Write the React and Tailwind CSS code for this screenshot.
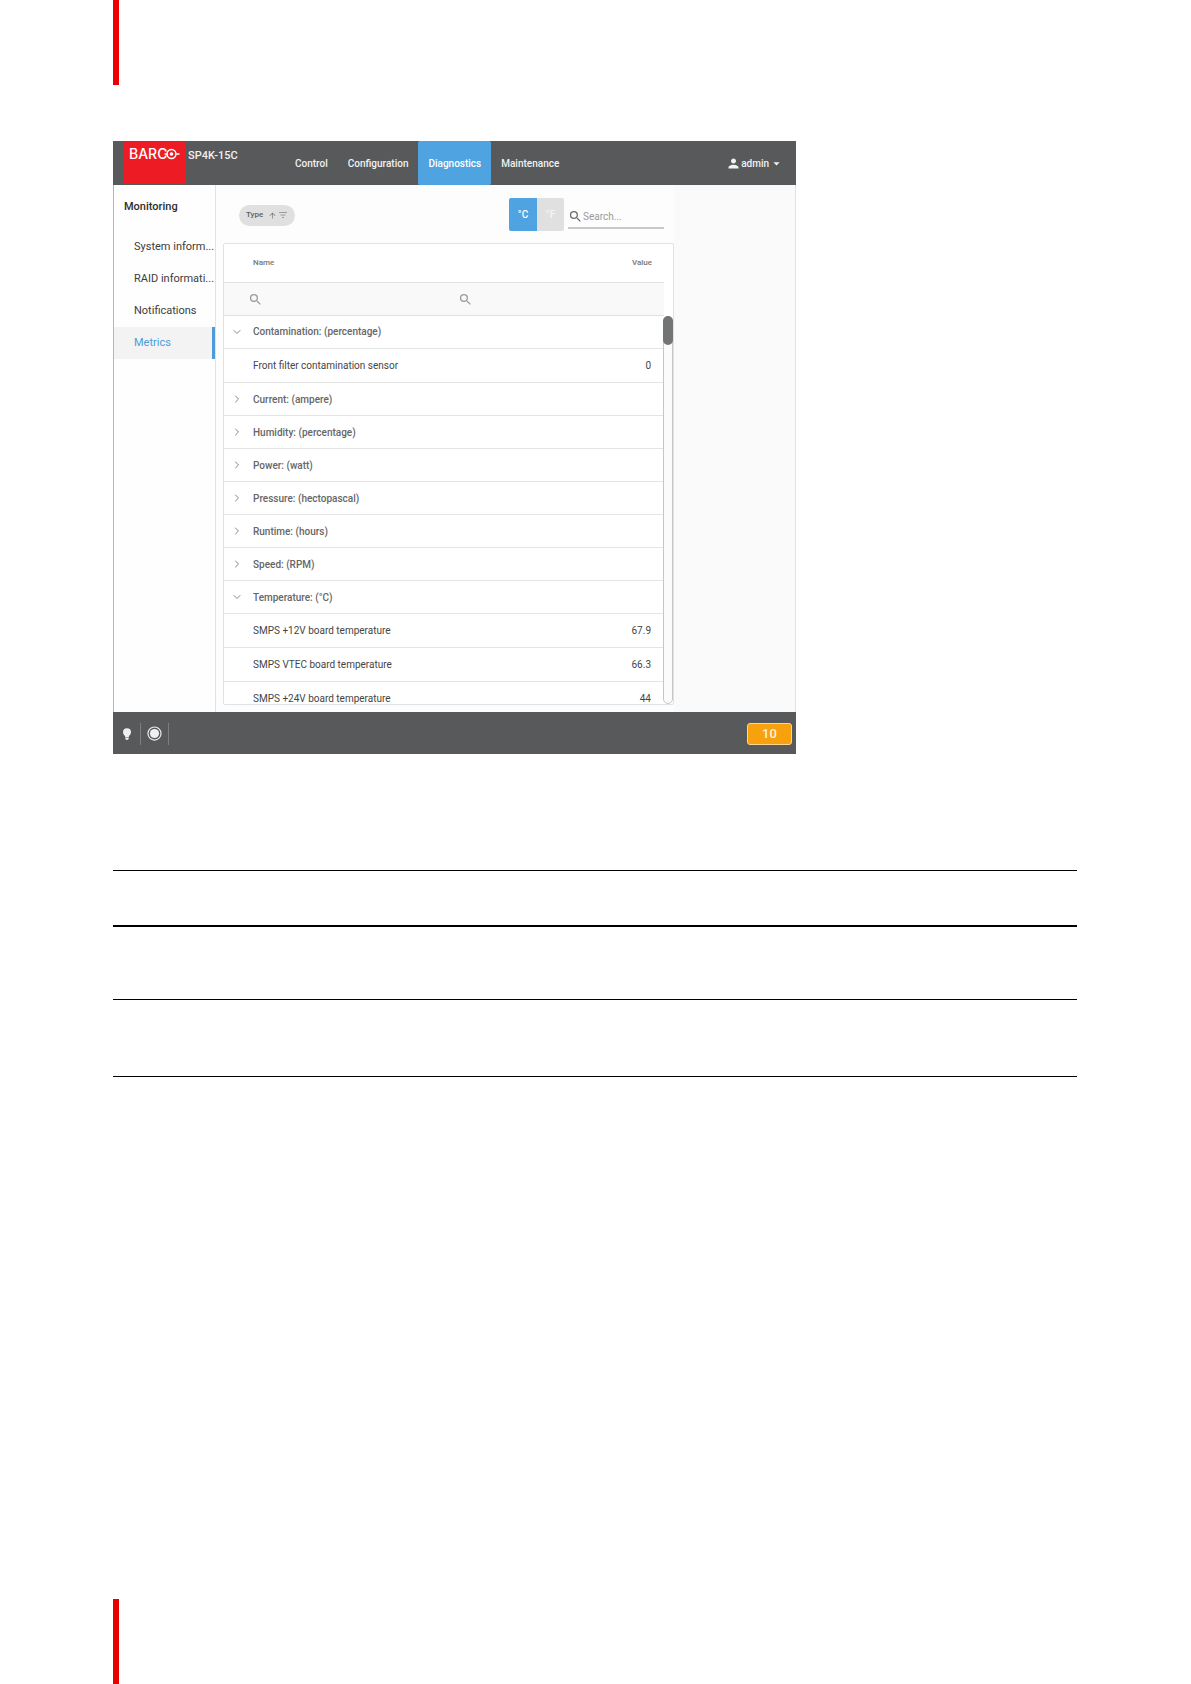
import { useState } from "react";
import { ChevronDown, ChevronRight } from "lucide-react";
import {
  MdArrowDropDown,
  MdArrowUpward,
  MdPerson,
  MdSearch,
} from "react-icons/md";

const tabs = ["Control", "Configuration", "Diagnostics", "Maintenance"];

const menu = [
  "System inform...",
  "RAID informati...",
  "Notifications",
  "Metrics",
];

const initialGroups = [
  {
    label: "Contamination: (percentage)",
    open: true,
    rows: [{ name: "Front filter contamination sensor", value: "0" }],
  },
  { label: "Current: (ampere)", rows: [] },
  { label: "Humidity: (percentage)", rows: [] },
  { label: "Power: (watt)", rows: [] },
  { label: "Pressure: (hectopascal)", rows: [] },
  { label: "Runtime: (hours)", rows: [] },
  { label: "Speed: (RPM)", rows: [] },
  {
    label: "Temperature: (°C)",
    open: true,
    rows: [
      { name: "SMPS +12V board temperature", value: "67.9" },
      { name: "SMPS VTEC board temperature", value: "66.3" },
      { name: "SMPS +24V board temperature", value: "44" },
    ],
  },
];

const BarcoLogo = () => (
  <div className="flex h-[42px] w-[62px] shrink-0 items-start bg-[#ed1c24] pl-[5px] pt-[4px] text-white">
    <span className="font-[Inter,sans-serif] text-[14px] font-medium leading-4">
      BARC
    </span>
    <svg
      viewBox="0 0 18 12"
      className="-ml-[5px] mt-[2px] h-[12px] w-[18px] shrink-0"
      fill="none"
      stroke="currentColor"
      aria-hidden="true"
    >
      <circle cx="9.5" cy="6" r="4.4" strokeWidth="1.5" />
      <circle cx="9.5" cy="6" r="1.8" fill="currentColor" stroke="none" />
      <path d="M2.5 6H5M14 6h3.5" strokeWidth="1.5" />
    </svg>
  </div>
);

const Header = ({ tab, onTab }) => (
  <header className="flex h-[44px] items-center bg-[#58595b] text-[#f1f1f1]">
    <div className="flex w-[172px] shrink-0 items-start gap-[2px] pl-[11px]">
      <BarcoLogo />
      <span className="pt-[6px] text-[11px] font-medium leading-4">
        SP4K-15C
      </span>
    </div>
    <nav className="flex h-full">
      {tabs.map((t) => (
        <button
          key={t}
          type="button"
          onClick={() => onTab(t)}
          className={
            t === tab
              ? "rounded-[2px] bg-[#4fa3e0] px-[10px] text-[10px] font-medium text-white"
              : "px-[10px] text-[10px] font-medium"
          }
        >
          {t}
        </button>
      ))}
    </nav>
    <button
      type="button"
      className="ml-auto flex items-center pr-[12px] text-[10px] font-medium"
    >
      <MdPerson className="size-[15px]" />
      admin
      <MdArrowDropDown className="size-[15px]" />
    </button>
  </header>
);

const Sidebar = ({ page, onPage }) => (
  <aside className="w-[102px] shrink-0 border-r border-[#e3e3e3] bg-[#fefefe] text-[#3c3c3c]">
    <h2 className="flex h-[46px] items-center pb-[2px] pl-[10px] text-[11px] font-medium text-[#2e2e2e]">
      Monitoring
    </h2>
    {menu.map((m) => (
      <button
        key={m}
        type="button"
        onClick={() => onPage(m)}
        className={
          m === page
            ? "block h-8 w-full whitespace-nowrap border-r-[3px] border-[#4f9bd9] bg-[#f3f3f3] pl-[20px] text-left text-[11px] text-[#4f9bd9]"
            : "block h-8 w-full whitespace-nowrap pl-[20px] text-left text-[11px]"
        }
      >
        {m}
      </button>
    ))}
  </aside>
);

const SortIcon = () => (
  <svg
    viewBox="0 0 10 8"
    className="ml-[1px] h-[8px] w-[10px]"
    stroke="#8a8a8a"
    strokeWidth="0.8"
    aria-hidden="true"
  >
    <path d="M1 1.5h8M2.5 4h5M4 6.5h2" />
  </svg>
);

const Toolbar = ({ unit, onUnit }) => (
  <div className="flex h-[58px] items-center pl-[16px] pr-[10px]">
    <button
      type="button"
      className="mt-[2px] flex h-[21px] items-center rounded-full bg-[#e0e0e0] px-[7px] text-[8px] font-medium text-[#5f5f5f]"
    >
      Type
      <MdArrowUpward className="ml-[5px] size-[9px] text-[#7d7d7d]" />
      <SortIcon />
    </button>
    <div className="ml-auto flex h-[33px] overflow-hidden rounded-[2px] text-[10px]">
      {["°C", "°F"].map((u) => (
        <button
          key={u}
          type="button"
          onClick={() => onUnit(u)}
          className={
            u === unit
              ? "w-[28px] bg-[#4fa3e0] font-medium text-white"
              : "w-[27px] bg-[#e0e0e0] font-medium text-[#f5f5f5]"
          }
        >
          {u}
        </button>
      ))}
    </div>
    <label className="ml-[4px] mt-[6px] flex h-[24px] w-[96px] items-center border-b-2 border-[#c9c9c9]">
      <MdSearch className="size-[15px] shrink-0 text-[#6b6b6b]" />
      <input
        type="search"
        aria-label="Search"
        placeholder="Search..."
        className="w-full min-w-0 text-[10px] outline-none placeholder:text-[#9a9a9a]"
      />
    </label>
  </div>
);

const FilterInput = ({ label }) => (
  <label className="flex items-center">
    <MdSearch className="size-[15px] shrink-0 text-[#9b9b9b]" />
    <input
      type="text"
      aria-label={label}
      className="w-full min-w-0 text-[10px] outline-none"
    />
  </label>
);

const MetricsTable = () => {
  const [groups, setGroups] = useState(initialGroups);

  const toggle = (label) => {
    setGroups((prev) =>
      prev.map((g) => (g.label === label ? { ...g, open: !g.open } : g))
    );
  };

  return (
    <div className="rounded-[2px] border border-[#e2e2e2] bg-white">
      <div className="pr-[9px]">
        <table className="w-full table-fixed text-[8px]">
          <thead>
            <tr className="h-[38px] border-b border-[#e4e4e4] text-[#777777]">
              <th className="w-[209px] pl-[29px] text-left font-medium">
                Name
              </th>
              <th className="pr-[12px] text-right font-medium">Value</th>
            </tr>
          </thead>
          <tbody>
            <tr className="h-[33px] border-b border-[#e0e0e0] bg-[#f9f9f9]">
              <td className="pl-[24px] pt-[2px]">
                <FilterInput label="Filter by name" />
              </td>
              <td className="pl-[25px] pt-[2px]">
                <FilterInput label="Filter by value" />
              </td>
            </tr>
          </tbody>
        </table>
      </div>
      <div className="flex h-[388px] overflow-hidden">
        <div className="min-w-0 flex-1">
          <table
            aria-label="Metrics"
            className="w-full table-fixed text-[10px] text-[#454545]"
          >
            <colgroup>
              <col />
              <col className="w-[80px]" />
            </colgroup>
            <tbody>
              {groups.map((g) => [
                <tr key={g.label} className="h-[33px] border-b border-[#e4e4e4]">
                  <th
                    colSpan={2}
                    className="text-left font-medium text-[#666666]"
                  >
                    <button
                      type="button"
                      aria-expanded={!!g.open}
                      onClick={() => toggle(g.label)}
                      className="flex w-full items-center gap-[10px] pl-[7px]"
                    >
                      {g.open ? (
                        <ChevronDown
                          className="size-[12px] text-[#858585]"
                          strokeWidth={2}
                        />
                      ) : (
                        <ChevronRight
                          className="size-[12px] text-[#858585]"
                          strokeWidth={2}
                        />
                      )}
                      {g.label}
                    </button>
                  </th>
                </tr>,
                ...(g.open ? g.rows : []).map((r) => (
                  <tr
                    key={r.name}
                    className="h-[34px] border-b border-[#e4e4e4]"
                  >
                    <td className="pl-[29px]">{r.name}</td>
                    <td className="pr-[12px] text-right">{r.value}</td>
                  </tr>
                )),
              ])}
            </tbody>
          </table>
        </div>
        {/* scrollbar */}
        <div className="w-[10px] shrink-0 rounded-full border border-[#c6c6c6] bg-[#fbfbfb]">
          <div className="-mx-px -mt-px h-[29px] rounded-full bg-[#737474]" />
        </div>
      </div>
    </div>
  );
};

const Footer = () => (
  <footer className="flex h-[42px] items-center bg-[#58595b] pl-[7px] pr-[4px] pt-[2px] text-[#efefef]">
    <button type="button" aria-label="Light" className="pr-[6px]">
      <svg viewBox="0 0 14 14" className="size-[14px]" fill="currentColor">
        <path d="M7 1.2a4 4 0 0 0-4 4c0 1.6 1 2.6 1.7 3.6.3.5.5 1 .6 1.6h3.4c.1-.6.3-1.1.6-1.6.7-1 1.7-2 1.7-3.6a4 4 0 0 0-4-4z" />
        <path d="M5.3 11h3.4v.8c0 .7-.7 1.2-1.7 1.2s-1.7-.5-1.7-1.2z" />
      </svg>
    </button>
    <div className="h-[22px] w-px bg-[#7d7e80]" />
    <button type="button" aria-label="Status" className="px-[6px]">
      <svg viewBox="0 0 14 14" className="size-[15px]">
        <circle
          cx="7"
          cy="7"
          r="6.1"
          fill="none"
          stroke="currentColor"
          strokeWidth="1.1"
        />
        <circle cx="7" cy="7" r="4.3" fill="currentColor" />
      </svg>
    </button>
    <div className="h-[22px] w-px bg-[#7d7e80]" />
    <button
      type="button"
      className="ml-auto h-[22px] w-[45px] rounded-[3px] border border-[#fbd793] bg-[#f8a10f] text-[13px] font-medium leading-5 text-[#fdf3df]"
    >
      10
    </button>
  </footer>
);

const App = () => {
  const [tab, setTab] = useState("Diagnostics");
  const [page, setPage] = useState("Metrics");
  const [unit, setUnit] = useState("°C");

  return (
    <div className="flex min-h-screen flex-col bg-white pl-[113px] pr-[114px] font-[Roboto,sans-serif]">
      <div className="h-[85px] w-[6px] bg-[#ee0000]" />

      <div className="mt-[56px] w-full max-w-[683px]">
        <Header tab={tab} onTab={setTab} />
        <div className="flex border-x border-l-[#b5b5b5] border-r-[#e2e2e2] bg-[#fafafa]">
          <Sidebar page={page} onPage={setPage} />
          <main className="mr-[121px] min-w-0 flex-1 bg-[#fdfdfd] pb-[7px] pl-[7px]">
            <Toolbar unit={unit} onUnit={setUnit} />
            <MetricsTable />
          </main>
        </div>
        <Footer />
      </div>

      <div className="mt-[116px]">
        <hr className="border-t border-black" />
        <hr className="mt-[54px] border-t-2 border-black" />
        <hr className="mt-[72px] border-t border-black" />
        <hr className="mt-[76px] border-t border-black" />
      </div>

      <div className="mt-auto h-[85px] w-[6px] bg-[#e60000]" />
    </div>
  );
};

export default App;
